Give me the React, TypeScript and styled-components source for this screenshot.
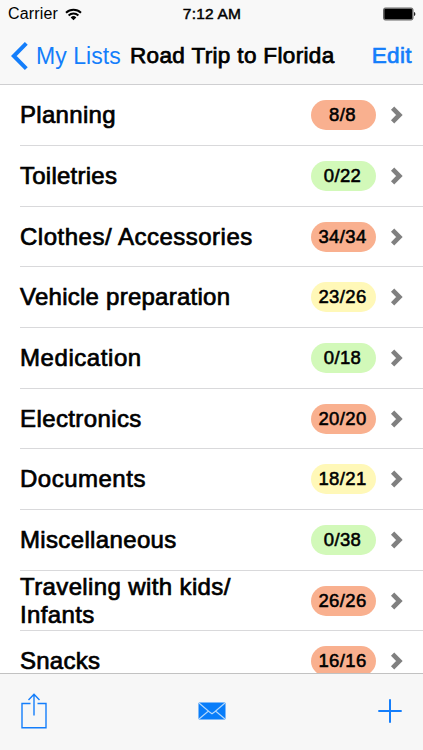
import React from "react";
import styled, { createGlobalStyle } from "styled-components";

const Global = createGlobalStyle`
  * { box-sizing: border-box; }
  body { margin: 0; background: #fff; overflow: hidden; }
`;

const Screen = styled.div`
  width: 423px;
  height: 750px;
  display: flex;
  flex-direction: column;
  overflow: hidden;
  background: #fff;
  color: #000;
  font-family: "Liberation Sans", Arial, sans-serif;
`;

const Header = styled.header`
  flex: none;
  height: 85px;
  background: #f8f8f8;
  border-bottom: 1px solid #cfcfd1;
`;

const StatusBar = styled.div`
  display: grid;
  grid-template-columns: 1fr auto 1fr;
  align-items: center;
  height: 28px;
  padding: 0 7px 0 8px;
`;

const Carrier = styled.div`
  display: flex;
  align-items: center;
  gap: 7px;
  font-size: 16px;
  letter-spacing: 0.15px;
`;

const Clock = styled.time`
  font-size: 15.5px;
  letter-spacing: 0.2px;
  -webkit-text-stroke: 0.5px #000;
`;

const Battery = styled.svg`
  justify-self: end;
`;

const NavBar = styled.nav`
  display: flex;
  align-items: center;
  height: 56px;
  padding: 0 11px;
`;

const BackButton = styled.a`
  display: flex;
  align-items: center;
  gap: 8px;
  width: 119px;
  color: #147efb;
  font-size: 23px;
  letter-spacing: 0.05px;
  white-space: nowrap;
`;

const Title = styled.h1`
  flex: 1;
  margin: 0;
  font-size: 22.5px;
  font-weight: 400;
  letter-spacing: 0.35px;
  white-space: nowrap;
  -webkit-text-stroke: 0.75px #000;
`;

const EditButton = styled.a`
  color: #147efb;
  font-size: 22.5px;
  letter-spacing: 0.4px;
  -webkit-text-stroke: 0.7px #147efb;
`;

const List = styled.ul`
  flex: 1;
  min-height: 0;
  margin: 0;
  padding: 0.3px 0 0 20px;
  overflow: hidden;
  list-style: none;
`;

const Row = styled.li`
  display: flex;
  align-items: center;
  height: 60.7px;
  padding: 0.3px 20px 0 0;
  border-bottom: 1px solid #d9d9db;
`;

const Name = styled.span<{ $spacing: number }>`
  flex: 1;
  max-width: 260px;
  margin-right: auto;
  font-size: 24px;
  line-height: 28px;
  letter-spacing: ${(p) => p.$spacing}px;
  -webkit-text-stroke: 0.7px #000;
`;

const tones = { full: "#f9b08f", none: "#d2f9b9", partial: "#fff8b8" };

const Badge = styled.span<{ $tone: keyof typeof tones }>`
  flex: none;
  width: 65px;
  height: 30px;
  padding-right: 2px;
  border-radius: 15px;
  background: ${(p) => tones[p.$tone]};
  font-size: 18.5px;
  letter-spacing: 0.35px;
  line-height: 30px;
  text-align: center;
  -webkit-text-stroke: 0.55px #000;
`;

const Chevron = styled.svg`
  flex: none;
  margin-left: 14px;
`;

const Toolbar = styled.footer`
  flex: none;
  display: grid;
  grid-template-columns: 1fr auto 1fr;
  align-items: center;
  height: 77px;
  padding: 0 20px 2px;
  background: #f7f7f7;
  border-top: 1px solid #c2c2c2;
`;

const EndIcon = styled.svg`
  justify-self: end;
`;

type Item = { name: string; count: string; tone: keyof typeof tones; spacing: number };

const items: Item[] = [
  { name: "Planning", count: "8/8", tone: "full", spacing: 0.3 },
  { name: "Toiletries", count: "0/22", tone: "none", spacing: 0.25 },
  { name: "Clothes/ Accessories", count: "34/34", tone: "full", spacing: 0.5 },
  { name: "Vehicle preparation", count: "23/26", tone: "partial", spacing: 0.25 },
  { name: "Medication", count: "0/18", tone: "none", spacing: 0.57 },
  { name: "Electronics", count: "20/20", tone: "full", spacing: 0.4 },
  { name: "Documents", count: "18/21", tone: "partial", spacing: 0.5 },
  { name: "Miscellaneous", count: "0/38", tone: "none", spacing: 0.35 },
  { name: "Traveling with kids/ Infants", count: "26/26", tone: "full", spacing: 0.38 },
  { name: "Snacks", count: "16/16", tone: "full", spacing: 0.25 },
];

export default function App() {
  return (
    <Screen>
      <Global />
      <Header>
        <StatusBar>
          <Carrier>
            Carrier
            <svg width="17" height="13" viewBox="0 0 17 13" fill="none" stroke="#000" strokeWidth="1.9">
              <path d="M1 4.8a10.8 10.8 0 0 1 15 0M3.6 7.5a7 7 0 0 1 9.8 0" />
              <path d="M8.5 12.2 5.7 9.4a4 4 0 0 1 5.6 0z" fill="#000" stroke="none" />
            </svg>
          </Carrier>
          <Clock>7:12 AM</Clock>
          <Battery width="33" height="14" viewBox="0 0 33 14">
            <rect x="0.5" y="1" width="29.5" height="12" rx="1.8" fill="#777" stroke="#666" />
            <rect x="1.5" y="2" width="27.5" height="10" rx="0.8" fill="#000" />
            <path d="M31 5c1.8.3 1.8 3.7 0 4z" fill="#222" />
          </Battery>
        </StatusBar>
        <NavBar>
          <BackButton>
            <svg width="17" height="28" viewBox="0 0 17 28" fill="none" stroke="#147efb" strokeWidth="4">
              <path d="M15.3 1.4 2.8 14l12.5 12.6" />
            </svg>
            My Lists
          </BackButton>
          <Title>Road Trip to Florida</Title>
          <EditButton>Edit</EditButton>
        </NavBar>
      </Header>
      <List>
        {items.map((item) => (
          <Row key={item.name}>
            <Name $spacing={item.spacing}>{item.name}</Name>
            <Badge $tone={item.tone}>{item.count}</Badge>
            <Chevron width="13" height="18" viewBox="0 0 13 18" fill="none" stroke="#808080" strokeWidth="4.6">
              <path d="m2.6 2.2 6.8 6.8-6.8 6.8" />
            </Chevron>
          </Row>
        ))}
      </List>
      <Toolbar>
        <svg width="28" height="36" viewBox="0 0 28 36" fill="none" stroke="#147efb" strokeWidth="1.4">
          <path d="M10.5 10.5H2v24.3h24V10.5h-8.5M14 22.5V1.5M8.5 7 14 1.3 19.5 7" />
        </svg>
        <svg width="28" height="18" viewBox="0 0 28 18">
          <rect x="0.5" y="0.5" width="27" height="17" rx="1" fill="#087dfa" />
          <path d="m1 1 10.5 9 2.5 1.8 2.5-1.8L27 1M1 17l9.5-8M27 17l-9.5-8" fill="none" stroke="#b4d8fb" strokeWidth="1.1" />
        </svg>
        <EndIcon width="26" height="24" viewBox="0 0 26 24" stroke="#147efb" strokeWidth="2">
          <path d="M13 0.3v23.4M1.3 12h23.4" />
        </EndIcon>
      </Toolbar>
    </Screen>
  );
}
